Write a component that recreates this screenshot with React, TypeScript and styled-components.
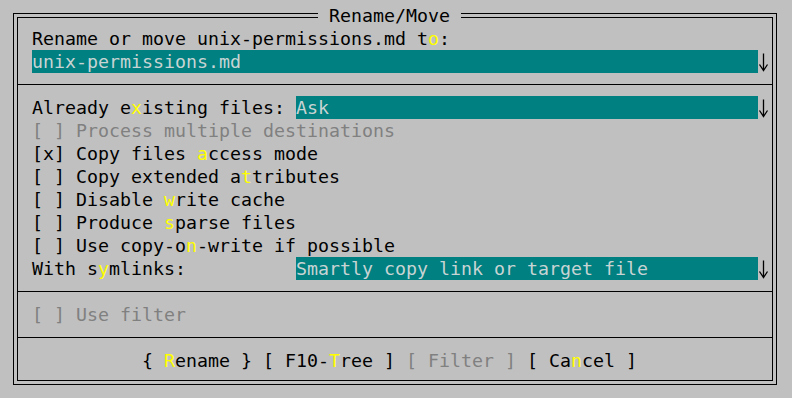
import styled, { createGlobalStyle } from "styled-components";

const CELL = 11;

const GlobalStyle = createGlobalStyle`
  html, body {
    margin: 0;
    padding: 0;
    background: #c0c0c0;
  }
  body {
    font-family: "DejaVu Sans Mono", "Liberation Mono", monospace;
    font-size: 18.27px;
    line-height: 23px;
    color: #000;
  }
`;

const Screen = styled.div`
  width: 792px;
  height: 398px;
  box-sizing: border-box;
  padding: 17px 0 0 17px;
  background: #c0c0c0;
  overflow: hidden;
`;

const Frame = styled.div`
  position: relative;
  width: 756px;
  height: 364px;
  box-sizing: border-box;
  border: 1px solid #000;
  box-shadow: 0 0 0 3px #c0c0c0, 0 0 0 4px #000;
  padding-top: 9px;
  display: flex;
  flex-direction: column;
`;

const Title = styled.div`
  position: absolute;
  top: -14px;
  left: 300px;
  width: ${13 * CELL}px;
  height: 23px;
  background: #c0c0c0;
  white-space: pre;
  text-align: center;
`;

const Row = styled.div<{ $disabled?: boolean }>`
  display: flex;
  align-items: center;
  height: 23px;
  padding-left: 14px;
  white-space: pre;
  color: ${(p) => (p.$disabled ? "#808080" : "#000")};
`;

const Separator = styled.div`
  position: relative;
  height: 23px;
  flex-shrink: 0;
  &::after {
    content: "";
    position: absolute;
    left: 0;
    right: 0;
    top: 11px;
    height: 1px;
    background: #000;
  }
`;

const Label = styled.span<{ $cols: number }>`
  width: ${(p) => p.$cols * CELL}px;
  flex-shrink: 0;
`;

const Field = styled.span<{ $cols: number }>`
  width: ${(p) => p.$cols * CELL}px;
  height: 23px;
  flex-shrink: 0;
  background: #008080;
  color: #c8d4d4;
  overflow: hidden;
`;

const ArrowCell = styled.svg`
  display: block;
  width: ${CELL}px;
  height: 23px;
  flex-shrink: 0;
`;

const Hot = styled.span`
  color: #ffff00;
`;

const ButtonBar = styled.div`
  display: flex;
  justify-content: center;
  gap: ${CELL}px;
  height: 23px;
  padding-right: ${CELL}px;
  white-space: pre;
`;

const Button = styled.span<{ $disabled?: boolean }>`
  color: ${(p) => (p.$disabled ? "#808080" : "#000")};
`;

function Arrow() {
  return (
    <ArrowCell viewBox="0 0 11 23">
      <path
        d="M5.5 3.5V20.5M1.5 14.5L5.5 20.5L9.5 14.5"
        fill="none"
        stroke="#000"
        strokeWidth="1.3"
      />
    </ArrowCell>
  );
}

function Check({
  checked,
  before,
  hot,
  after,
  disabled,
}: {
  checked?: boolean;
  before: string;
  hot?: string;
  after?: string;
  disabled?: boolean;
}) {
  return (
    <Row $disabled={disabled}>
      {checked ? "[x] " : "[ ] "}
      {before}
      {hot && <Hot>{hot}</Hot>}
      {after}
    </Row>
  );
}

export default function App() {
  return (
    <>
      <GlobalStyle />
      <Screen>
        <Frame>
          <Title> Rename/Move </Title>
          <Row>
            Rename or move unix-permissions.md t<Hot>o</Hot>:
          </Row>
          <Row>
            <Field $cols={66}>unix-permissions.md</Field>
            <Arrow />
          </Row>
          <Separator />
          <Row>
            <Label $cols={24}>
              Already e<Hot>x</Hot>isting files:{" "}
            </Label>
            <Field $cols={42}>Ask</Field>
            <Arrow />
          </Row>
          <Check disabled before="Process multiple destinations" />
          <Check checked before="Copy files " hot="a" after="ccess mode" />
          <Check before="Copy extended a" hot="t" after="tributes" />
          <Check before="Disable " hot="w" after="rite cache" />
          <Check before="Produce " hot="s" after="parse files" />
          <Check before="Use copy-o" hot="n" after="-write if possible" />
          <Row>
            <Label $cols={24}>
              With s<Hot>y</Hot>mlinks:
            </Label>
            <Field $cols={42}>Smartly copy link or target file</Field>
            <Arrow />
          </Row>
          <Separator />
          <Check disabled before="Use filter" />
          <Separator />
          <ButtonBar>
            <Button>
              {"{ "}
              <Hot>R</Hot>
              {"ename }"}
            </Button>
            <Button>
              [ F10-<Hot>T</Hot>ree ]
            </Button>
            <Button $disabled>[ Filter ]</Button>
            <Button>
              [ Ca<Hot>n</Hot>cel ]
            </Button>
          </ButtonBar>
        </Frame>
      </Screen>
    </>
  );
}
